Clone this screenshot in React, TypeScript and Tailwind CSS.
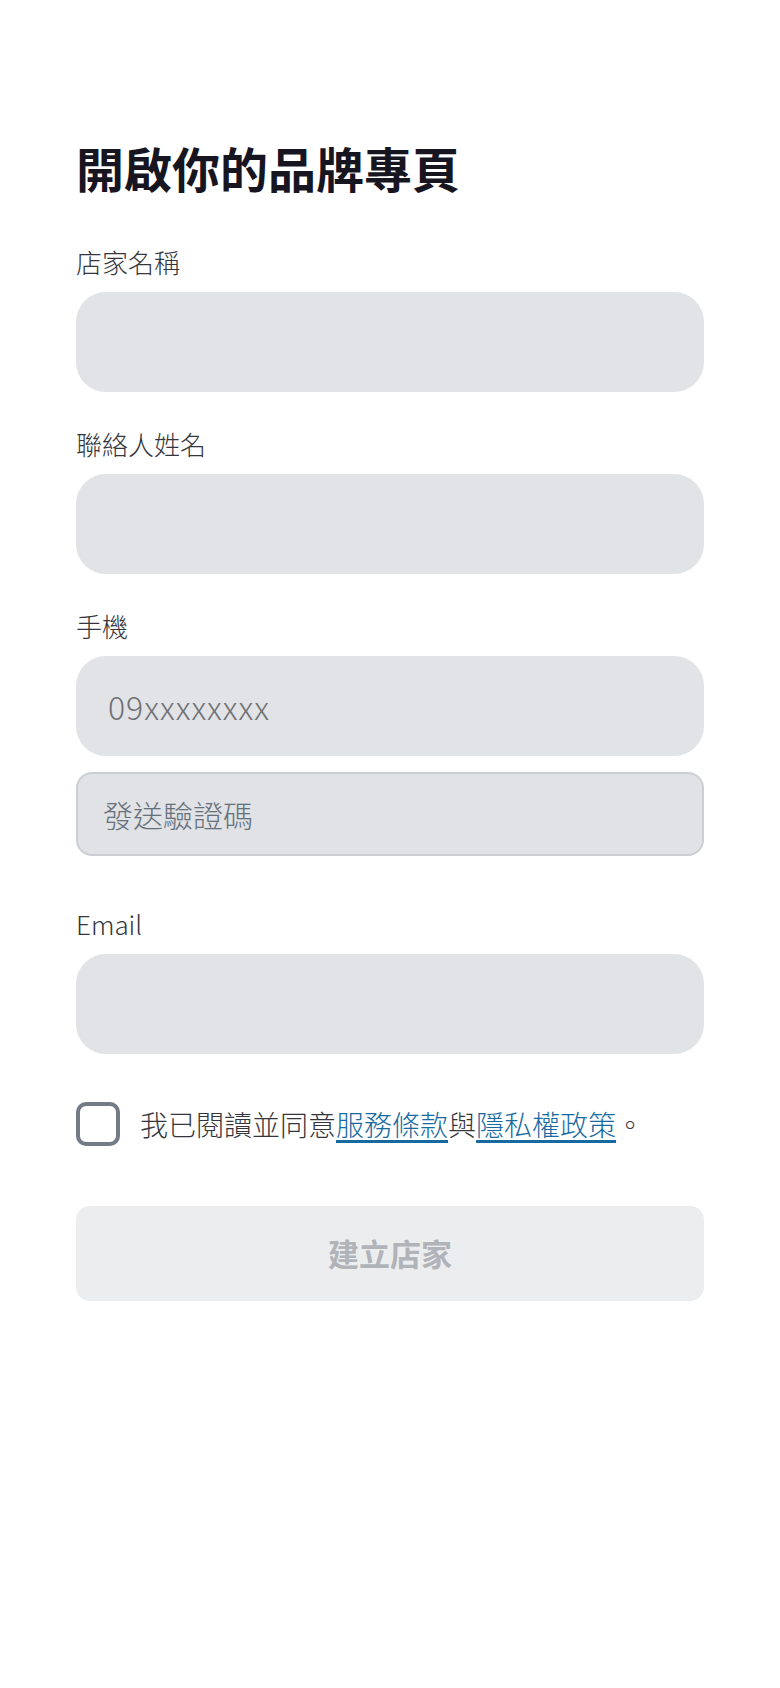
import React from "react";

const font = { fontFamily: '"Noto Sans CJK TC", "Noto Sans", sans-serif' };

function Field({ label, placeholder }: { label: string; placeholder?: string }) {
  return (
    <div className="flex flex-col">
      <div className="h-[26px] text-[26px] leading-[26px] font-light text-[#35363d]">{label}</div>
      <input
        readOnly
        placeholder={placeholder}
        className="mt-[17px] h-[100px] w-full rounded-[30px] bg-[#e2e3e6] px-[32px] text-[32px] font-light tracking-[1px] text-[#3d3e45] outline-none placeholder:text-[#6f7175]"
        style={font}
      />
    </div>
  );
}

export default function App() {
  return (
    <div className="min-h-[1688px] w-full bg-white" style={font}>
      <div className="flex flex-col px-[76px] pt-[143px]">
        <h1 className="text-[48px] leading-[48px] font-bold text-[#17151f]">開啟你的品牌專頁</h1>

        <div className="mt-[58px] flex flex-col gap-[39px]">
          <Field label="店家名稱" />
          <Field label="聯絡人姓名" />
          <div className="flex flex-col">
            <Field label="手機" placeholder="09xxxxxxxx" />
            <button
              type="button"
              className="mt-[16px] flex h-[84px] w-full items-center rounded-[16px] border-2 border-[#cbced3] bg-[#e0e2e5] px-[25px] text-left text-[30px] font-light text-[#66707b]"
              style={font}
            >
              發送驗證碼
            </button>
          </div>
        </div>

        <div className="mt-[55px]">
          <Field label="Email" />
        </div>

        <label className="mt-[48px] flex items-center gap-[20px]">
          <span className="h-[44px] w-[44px] shrink-0 rounded-[10px] border-[4px] border-[#737b86] bg-white" />
          <span className="text-[28px] leading-[28px] font-light text-[#35363d]">
            我已閱讀並同意
            <a className="text-[#176aa0] underline decoration-[3px] underline-offset-[4px]">服務條款</a>
            與
            <a className="text-[#176aa0] underline decoration-[3px] underline-offset-[4px]">隱私權政策</a>
            。
          </span>
        </label>

        <button
          type="button"
          className="mt-[60px] flex h-[95px] w-full items-center justify-center rounded-[14px] bg-[#ecedef] text-[31px] font-bold text-[#b0b3b8]"
          style={font}
        >
          建立店家
        </button>
      </div>
    </div>
  );
}
